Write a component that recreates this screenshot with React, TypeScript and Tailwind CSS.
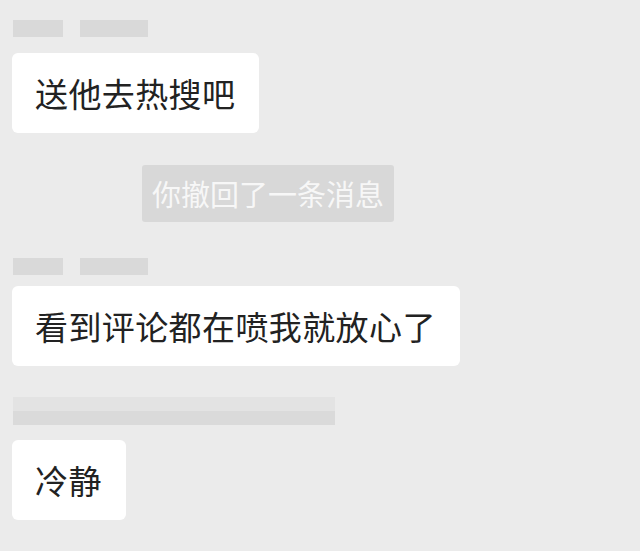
import React from "react";

const font = { fontFamily: '"Noto Sans CJK SC", "Noto Sans", sans-serif' };

function Bubble({ text }: { text: string }) {
  return (
    <div className="w-fit h-[80px] flex items-center bg-white rounded-[6px] pl-[23px] pr-[24px] text-[33px] tracking-[0.4px] leading-none text-[#222222]">
      {text}
    </div>
  );
}

function NameRow() {
  return (
    <div className="flex gap-[17px] pl-[1px]">
      <div className="w-[50px] h-[17px] bg-[#d9d9d9]" />
      <div className="w-[68px] h-[17px] bg-[#d9d9d9]" />
    </div>
  );
}

export default function App() {
  return (
    <div className="w-[640px] h-[551px] bg-[#ebebeb] overflow-hidden" style={font}>
      <div className="flex flex-col items-start pl-[12px] pt-[20px]">
        <NameRow />
        <div className="mt-[16px]">
          <Bubble text="送他去热搜吧" />
        </div>
        <div className="mt-[32px] ml-[130px] h-[57px] w-[252px] flex items-center justify-center bg-[#d8d8d8] rounded-[3px] text-[29px] leading-none text-[#f7f7f7]">
          你撤回了一条消息
        </div>
        <div className="mt-[36px]">
          <NameRow />
        </div>
        <div className="mt-[11px]">
          <Bubble text="看到评论都在喷我就放心了" />
        </div>
        <div className="mt-[31px] ml-[1px] w-[322px] flex flex-col">
          <div className="h-[14px] bg-[#e3e3e3]" />
          <div className="h-[14px] bg-[#dadada]" />
        </div>
        <div className="mt-[15px]">
          <Bubble text="冷静" />
        </div>
      </div>
    </div>
  );
}
